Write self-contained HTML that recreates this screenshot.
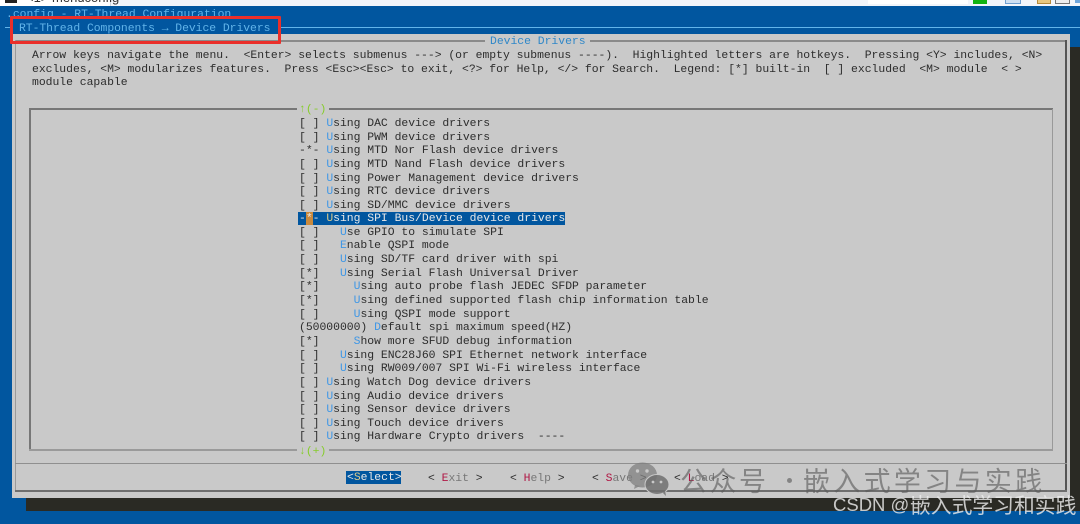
<!DOCTYPE html>
<html><head><meta charset="utf-8">
<style>
html,body{margin:0;padding:0;background:#01569f;}
#p{position:relative;width:1080px;height:524px;overflow:hidden;background:#01569f;font-family:"Liberation Mono","DejaVu Sans Mono",monospace;font-size:11.4px;line-height:14px;letter-spacing:-.01px;color:#2c2c2c;}
.a{position:absolute;}
.t{position:absolute;white-space:pre;filter:blur(.25px);}
.u{color:#3f97e6;}
.r{color:#b01845;}
.g{color:#86cc2c;}
.l{color:#777;}
</style></head><body>
<div id="p">
<div class="a" style="left:0;top:0;width:1080px;height:6px;background:#f2f5fa"></div>
<div class="a" style="left:0;top:0;width:110px;height:6px;background:#fff"></div>
<div class="a" style="left:110px;top:0;width:1px;height:6px;background:#cfd6df"></div>
<div class="a" style="left:5px;top:0;width:12px;height:3px;background:#222"></div>
<div class="t" style="left:26px;top:-9px;font:13px/14px 'Liberation Sans',sans-serif;letter-spacing:0;color:#333">&lt;1&gt; menuconfig</div>
<div class="a" style="left:868px;top:0;width:100px;height:4px;background:#fff"></div>
<div class="a" style="left:973px;top:0;width:14px;height:4px;background:#12b312"></div>
<div class="a" style="left:1005px;top:0;width:14px;height:3px;background:#cfe0f2;border:1px solid #6f9fd0;border-top:0"></div>
<div class="a" style="left:1037px;top:0;width:12px;height:3px;background:#e8c77f;border:1px solid #b58a3c;border-top:0"></div>
<div class="a" style="left:1055px;top:0;width:13px;height:3px;background:#eee;border:1px solid #777;border-top:0"></div>
<div class="a" style="left:1075px;top:0;width:5px;height:3px;background:#6fa6dc"></div>

<div class="t" style="left:6px;top:8px;color:#62b4ea">.config - RT-Thread Configuration</div>
<div class="a" style="left:5px;top:27px;width:1075px;height:1px;background:#62b4ea"></div>
<div class="a" style="left:13px;top:20px;width:268px;height:16px;background:#01569f"></div>
<div class="t" style="left:19px;top:22px;letter-spacing:-.04px;color:#62b4ea">RT-Thread Components → Device Drivers</div>

<!-- shadow -->
<div class="a" style="left:26px;top:47px;width:1054px;height:464px;background:#2a2a24"></div>
<!-- dialog -->
<div class="a" style="left:12px;top:34px;width:1058px;height:464px;background:#c9c9c9"></div>
<div class="a" style="left:15px;top:40px;width:1051px;height:1px;border-top:2px solid #8a8a8a"></div>
<div class="a" style="left:15px;top:40px;width:1px;height:451px;background:#9a9a9a"></div>
<div class="a" style="left:1065px;top:40px;width:2px;height:451px;background:#555"></div>
<div class="a" style="left:15px;top:490px;width:1052px;height:2px;background:#6e6e6e"></div>
<div class="a" style="left:15px;top:463px;width:1052px;height:1px;background:#8f8f8f"></div>
<div class="a" style="left:485px;top:36px;width:105px;height:12px;background:#c9c9c9"></div>
<div class="t" style="left:490px;top:35px;color:#2f87c8">Device Drivers</div>

<div class="t" style="left:32px;top:49px">Arrow keys navigate the menu.  &lt;Enter&gt; selects submenus ---&gt; (or empty submenus ----).  Highlighted letters are hotkeys.  Pressing &lt;Y&gt; includes, &lt;N&gt;</div>
<div class="t" style="left:32px;top:63px">excludes, &lt;M&gt; modularizes features.  Press &lt;Esc&gt;&lt;Esc&gt; to exit, &lt;?&gt; for Help, &lt;/&gt; for Search.  Legend: [*] built-in  [ ] excluded  &lt;M&gt; module  &lt; &gt;</div>
<div class="t" style="left:32px;top:76px">module capable</div>

<!-- list box -->
<div class="a" style="left:29px;top:108px;width:1024px;height:2px;background:#777"></div>
<div class="a" style="left:29px;top:108px;width:2px;height:342px;background:#777"></div>
<div class="a" style="left:1052px;top:109px;width:1px;height:341px;background:#999"></div>
<div class="a" style="left:29px;top:449px;width:1024px;height:2px;background:#9a9a9a"></div>
<div class="a" style="left:297px;top:102px;width:32px;height:12px;background:#c9c9c9"></div>
<div class="t g" style="left:299px;top:103px">↑(-)</div>
<div class="a" style="left:297px;top:444px;width:32px;height:12px;background:#c9c9c9"></div>
<div class="t g" style="left:299px;top:445px">↓(+)</div>

<div class="t" style="left:299px;top:117px">[ ] <span class="u">U</span>sing DAC device drivers</div>
<div class="t" style="left:299px;top:131px">[ ] <span class="u">U</span>sing PWM device drivers</div>
<div class="t" style="left:299px;top:144px">-*- <span class="u">U</span>sing MTD Nor Flash device drivers</div>
<div class="t" style="left:299px;top:158px">[ ] <span class="u">U</span>sing MTD Nand Flash device drivers</div>
<div class="t" style="left:299px;top:172px">[ ] <span class="u">U</span>sing Power Management device drivers</div>
<div class="t" style="left:299px;top:185px">[ ] <span class="u">U</span>sing RTC device drivers</div>
<div class="t" style="left:299px;top:199px">[ ] <span class="u">U</span>sing SD/MMC device drivers</div>
<div class="a" style="left:298px;top:212px;width:267px;height:13px;background:#01569f"></div>
<div class="a" style="left:306px;top:212px;width:7px;height:13px;background:#c98a3e"></div>
<div class="t" style="left:299px;top:212px;color:#e8e8e8">-*- <span style="color:#d8c98a">U</span>sing SPI Bus/Device device drivers</div>
<div class="t" style="left:299px;top:226px">[ ]   <span class="u">U</span>se GPIO to simulate SPI</div>
<div class="t" style="left:299px;top:239px">[ ]   <span class="u">E</span>nable QSPI mode</div>
<div class="t" style="left:299px;top:253px">[ ]   <span class="u">U</span>sing SD/TF card driver with spi</div>
<div class="t" style="left:299px;top:267px">[*]   <span class="u">U</span>sing Serial Flash Universal Driver</div>
<div class="t" style="left:299px;top:280px">[*]     <span class="u">U</span>sing auto probe flash JEDEC SFDP parameter</div>
<div class="t" style="left:299px;top:294px">[*]     <span class="u">U</span>sing defined supported flash chip information table</div>
<div class="t" style="left:299px;top:308px">[ ]     <span class="u">U</span>sing QSPI mode support</div>
<div class="t" style="left:299px;top:321px">(50000000) <span class="u">D</span>efault spi maximum speed(HZ)</div>
<div class="t" style="left:299px;top:335px">[*]     <span class="u">S</span>how more SFUD debug information</div>
<div class="t" style="left:299px;top:349px">[ ]   <span class="u">U</span>sing ENC28J60 SPI Ethernet network interface</div>
<div class="t" style="left:299px;top:362px">[ ]   <span class="u">U</span>sing RW009/007 SPI Wi-Fi wireless interface</div>
<div class="t" style="left:299px;top:376px">[ ] <span class="u">U</span>sing Watch Dog device drivers</div>
<div class="t" style="left:299px;top:390px">[ ] <span class="u">U</span>sing Audio device drivers</div>
<div class="t" style="left:299px;top:403px">[ ] <span class="u">U</span>sing Sensor device drivers</div>
<div class="t" style="left:299px;top:417px">[ ] <span class="u">U</span>sing Touch device drivers</div>
<div class="t" style="left:299px;top:430px">[ ] <span class="u">U</span>sing Hardware Crypto drivers  ----</div>

<!-- buttons -->
<div class="a" style="left:346px;top:471px;width:55px;height:13px;background:#01569f"></div>
<div class="t" style="left:347px;top:471px;color:#e8e8e8">&lt;<span style="color:#d8c98a">S</span>elect&gt;</div>
<div class="t" style="left:428px;top:472px">&lt; <span class="r">E</span><span class="l">xit</span> &gt;</div>
<div class="t" style="left:510px;top:472px">&lt; <span class="r">H</span><span class="l">elp</span> &gt;</div>
<div class="t" style="left:592px;top:472px">&lt; <span class="r">S</span><span class="l">ave</span> &gt;</div>
<div class="t" style="left:674px;top:472px">&lt; <span class="r">L</span><span class="l">oad</span> &gt;</div>

<!-- watermark -->
<svg class="a" style="left:620px;top:460px" width="52" height="40" viewBox="0 0 52 40">
<ellipse cx="22.5" cy="15" rx="14.5" ry="12.5" fill="#7f7f7f" fill-opacity=".75"/>
<path d="M15 25l-1 4 6-3z" fill="#7f7f7f" fill-opacity=".75"/>
<ellipse cx="37" cy="24.5" rx="12" ry="10" fill="#707070" fill-opacity=".85" stroke="#c9c9c9" stroke-width="1"/>
<path d="M43 33l3 3-1-6z" fill="#707070" fill-opacity=".85"/>
<circle cx="17.5" cy="11" r="1.7" fill="#c9c9c9"/><circle cx="27" cy="11" r="1.7" fill="#c9c9c9"/>
<circle cx="33" cy="22" r="1.4" fill="#c9c9c9"/><circle cx="41" cy="22" r="1.4" fill="#c9c9c9"/>
</svg>
<div class="t" style="left:680px;top:464px;font:27px/32px 'Noto Sans CJK SC','WenQuanYi Zen Hei',sans-serif;letter-spacing:2.5px;color:rgba(90,90,90,.62)">公众号</div>
<div class="a" style="left:787px;top:478px;width:5px;height:5px;border-radius:3px;background:rgba(90,90,90,.62)"></div>
<div class="t" style="left:803px;top:464px;font:27px/32px 'Noto Sans CJK SC','WenQuanYi Zen Hei',sans-serif;letter-spacing:3.3px;color:rgba(90,90,90,.62)">嵌入式学习与实践</div>
<div class="t" style="left:833px;top:494px;font:18.5px/22px 'Liberation Sans',sans-serif;letter-spacing:0;color:rgba(235,235,235,.82)">CSDN @</div>
<div class="t" style="left:910px;top:492px;font:20.8px/24px 'Noto Sans CJK SC',sans-serif;letter-spacing:0;color:rgba(235,235,235,.82)">嵌入式学习和实践</div>

<!-- red annotation -->
<div class="a" style="left:10px;top:16px;width:265px;height:22px;border:3px solid #ea2f2a;border-radius:1px"></div>
</div>
</body></html>
